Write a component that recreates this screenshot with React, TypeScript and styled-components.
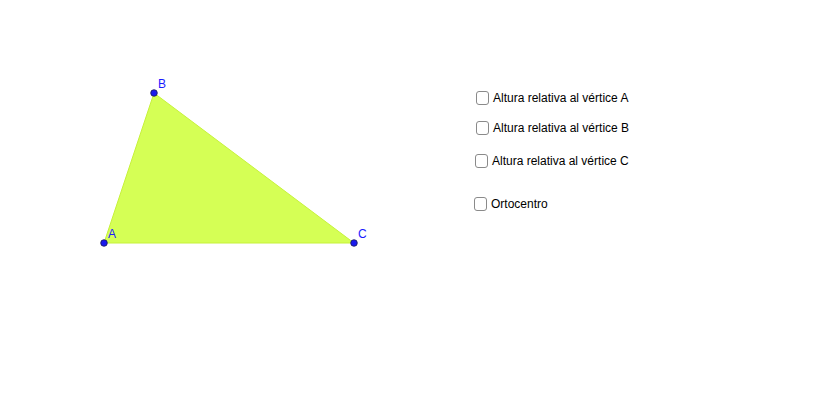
import React from 'react';
import styled, { createGlobalStyle } from 'styled-components';

const GlobalStyle = createGlobalStyle`
  html, body {
    margin: 0;
    padding: 0;
    background: #fff;
  }
`;

const Page = styled.div`
  display: flex;
  width: 822px;
  height: 420px;
  background: #fff;
  overflow: hidden;
  font-family: Arial, "Liberation Sans", sans-serif;
`;

const Drawing = styled.svg`
  flex: 0 0 460px;
  height: 420px;
`;

const Panel = styled.div`
  display: flex;
  flex-direction: column;
  padding-top: 90px;
`;

const Option = styled.label<{ $top: number; $indent: number }>`
  display: flex;
  align-items: center;
  gap: 4px;
  margin-top: ${(p) => p.$top}px;
  margin-left: ${(p) => p.$indent}px;
  font-size: 12px;
  color: #000;
  height: 16px;
  cursor: pointer;
`;

const Box = styled.span`
  width: 11px;
  height: 12px;
  border: 1.5px solid #8a8a8a;
  border-radius: 3px;
  background: #fff;
`;

// Point definitions in page coordinates
const points = [
  { name: 'A', x: 104, y: 243, lx: 108, ly: 238 },
  { name: 'B', x: 154, y: 93, lx: 158, ly: 88 },
  { name: 'C', x: 354, y: 243, lx: 358, ly: 238 },
];

const options = [
  { text: 'Altura relativa al vértice A', top: 0, indent: 16 },
  { text: 'Altura relativa al vértice B', top: 14, indent: 16 },
  { text: 'Altura relativa al vértice C', top: 17, indent: 15 },
  { text: 'Ortocentro', top: 27, indent: 14 },
];

function App() {
  const poly = points.map((p) => `${p.x},${p.y}`).join(' ');

  return (
    <>
      <GlobalStyle />
      <Page>
        <Drawing viewBox="0 0 460 420">
          <polygon points={poly} fill="#d5ff55" stroke="#c6f23a" strokeWidth="1" />
          {points.map((p) => (
            <g key={p.name}>
              <circle cx={p.x} cy={p.y} r="3.3" fill="#1a1aee" stroke="#1a1a55" strokeWidth="0.8" />
              <text
                x={p.lx}
                y={p.ly}
                fontSize="12"
                fill="#1a1aff"
                fontFamily="Arial, 'Liberation Sans', sans-serif"
              >
                {p.name}
              </text>
            </g>
          ))}
        </Drawing>
        <Panel>
          {options.map((o) => (
            <Option key={o.text} $top={o.top} $indent={o.indent}>
              <Box />
              {o.text}
            </Option>
          ))}
        </Panel>
      </Page>
    </>
  );
}

export default App;
